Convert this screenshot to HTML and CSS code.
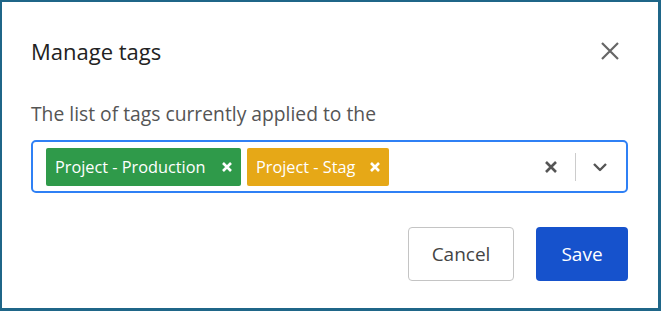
FILE: index.html
```html
<!DOCTYPE html>
<html lang="en">
<head>
  <meta charset="UTF-8">
  <title>Manage tags</title>
  <link rel="stylesheet" href="styles.css">
</head>
<body>
  <div class="modal">
    <div class="modal-header">
      <h2>Manage tags</h2>
      <button class="close-btn" aria-label="Close">
        <svg width="20" height="20" viewBox="0 0 20 20"><path d="M2 2L18 18M18 2L2 18" stroke="#666" stroke-width="2.2" fill="none"/></svg>
      </button>
    </div>
    <p class="desc">The list of tags currently applied to the</p>
    <div class="select">
      <div class="tags">
        <span class="tag green">Project - Production
          <svg class="tag-x" width="12" height="12" viewBox="0 0 12 12"><path d="M2 2L10 10M10 2L2 10" stroke="#fff" stroke-width="2.6" fill="none"/></svg>
        </span>
        <span class="tag orange">Project - Stag
          <svg class="tag-x" width="12" height="12" viewBox="0 0 12 12"><path d="M2 2L10 10M10 2L2 10" stroke="#fff" stroke-width="2.6" fill="none"/></svg>
        </span>
      </div>
      <div class="select-icons">
        <svg class="clear" width="14" height="14" viewBox="0 0 14 14"><path d="M2 2L12 12M12 2L2 12" stroke="#555" stroke-width="2.6" fill="none"/></svg>
        <span class="sep"></span>
        <svg class="chevron" width="16" height="10" viewBox="0 0 16 10"><path d="M2 2L8 8L14 2" stroke="#555" stroke-width="2.4" fill="none" stroke-linejoin="round"/></svg>
      </div>
    </div>
    <div class="modal-footer">
      <button class="btn btn-cancel">Cancel</button>
      <button class="btn btn-save">Save</button>
    </div>
  </div>
</body>
</html>
```

FILE: styles.css
```css
body {
  margin: 0;
  font-family: "Open Sans", "Noto Sans", sans-serif;
  background: #fff;
}
.modal {
  box-sizing: border-box;
  width: 661px;
  height: 311px;
  border: 2px solid #1f6688;
  border-right-width: 3px;
  border-bottom-width: 3px;
  padding: 0 30px 0 29px;
  background: #fff;
}
.modal-header {
  display: flex;
  justify-content: space-between;
  align-items: center;
  padding-top: 34px;
}
.modal-header h2 {
  margin: 0;
  font-size: 22px;
  font-weight: 400;
  color: #222;
  line-height: 30px;
}
.close-btn {
  border: none;
  background: none;
  padding: 0;
  margin-right: 8px;
  width: 20px;
  height: 20px;
  cursor: pointer;
}
.desc {
  margin: 35px 0 13px;
  font-size: 19.3px;
  line-height: 26px;
  color: #555;
}
.select {
  display: flex;
  align-items: center;
  justify-content: space-between;
  height: 53px;
  box-sizing: border-box;
  border: 2px solid #2f80f5;
  border-radius: 5px;
  padding: 0 18px 0 13px;
}
.tags {
  display: flex;
  gap: 6px;
}
.tag {
  display: flex;
  align-items: center;
  height: 38px;
  box-sizing: border-box;
  padding: 0 8px 0 9px;
  border-radius: 2px;
  color: #fff;
  font-size: 16.3px;
}
.tag.green {
  background: #2f9a4a;
  width: 195px;
}
.tag.orange {
  background: #e6a817;
  width: 142px;
}
.tag-x {
  margin-left: auto;
}
.select-icons {
  display: flex;
  align-items: center;
}
.sep {
  width: 1px;
  height: 28px;
  background: #ccc;
  margin: 0 16px 0 17px;
}
.modal-footer {
  display: flex;
  justify-content: flex-end;
  gap: 22px;
  margin-top: 34px;
}
.btn {
  height: 54px;
  border-radius: 4px;
  font-family: inherit;
  font-size: 19px;
  cursor: pointer;
}
.btn-cancel {
  width: 106px;
  background: #fff;
  border: 1px solid #c4c4c4;
  color: #444;
}
.btn-save {
  width: 92px;
  background: #1652cc;
  border: none;
  color: #fff;
}
```
